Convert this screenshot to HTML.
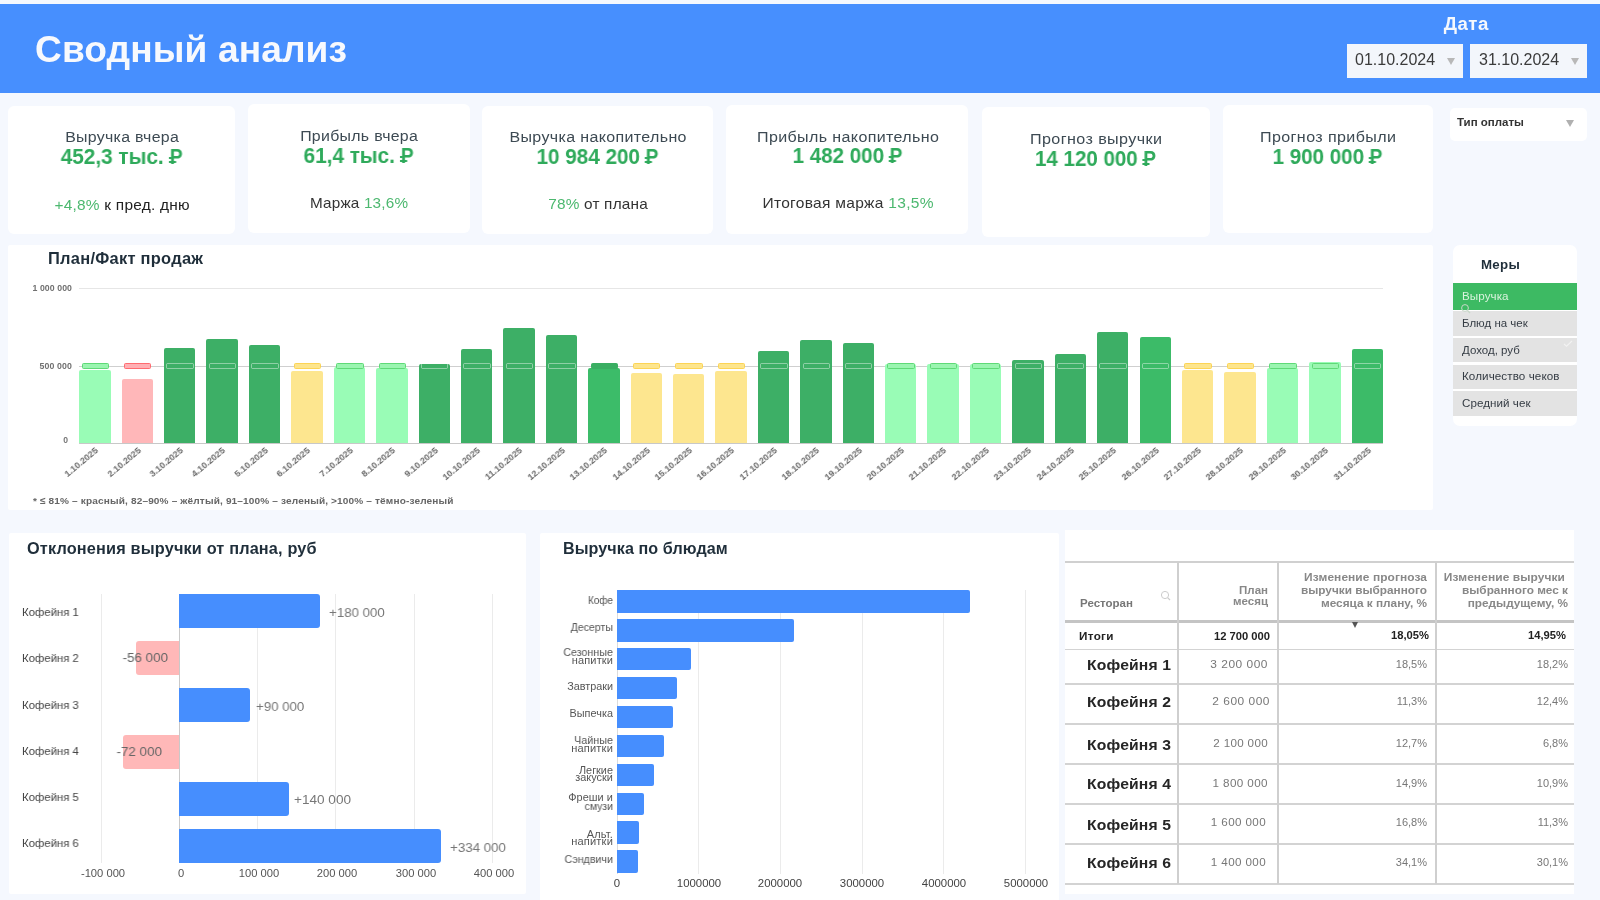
<!DOCTYPE html>
<html lang="ru"><head><meta charset="utf-8"><title>Сводный анализ</title>
<style>
html,body{margin:0;padding:0;}
body{width:1600px;height:900px;overflow:hidden;position:relative;background:#f5f8fe;font-family:"Liberation Sans", sans-serif;}
.t{position:absolute;line-height:1;white-space:nowrap;will-change:transform;}
.r{position:absolute;box-sizing:border-box;}
.tri{position:absolute;width:0;height:0;}
.g2{color:#4cb86f;}
.rub{position:relative;display:inline-block;transform:scaleX(0.92);transform-origin:0 50%;}
.rub i{position:absolute;left:-0.08em;width:0.55em;background:currentColor;}
.xl{width:200px;text-align:right;font-size:9.1px;font-weight:700;color:#6a6a6a;transform:rotate(-40deg);transform-origin:100% 50%;}
.ml{width:300px;text-align:right;font-size:10.3px;line-height:9.6px;color:#555;white-space:nowrap;}
</style></head><body>
<div class="r" style="left:0.00px;top:4.00px;width:1600.00px;height:89.00px;background:#478ffe;"></div>
<div class="t" style="top:30.98px;font-size:37px;font-weight:700;color:#f7f9fd;letter-spacing:0.088px;left:35.00px;transform:scaleX(1.003708188285152);transform-origin:0 0;">Сводный анализ</div>
<div class="t" style="top:14.56px;font-size:18px;font-weight:700;color:#f5f8fd;letter-spacing:0.471px;text-indent:0.471px;left:1066.30px;width:800px;text-align:center;transform:scaleX(1.035133108361455);transform-origin:50% 0;">Дата</div>
<div class="r" style="left:1346.50px;top:44.00px;width:116.50px;height:34.00px;background:#f3f6fb;"></div>
<div class="r" style="left:1470.00px;top:44.00px;width:117.00px;height:34.00px;background:#f3f6fb;"></div>
<div class="t" style="top:52.26px;font-size:16px;font-weight:400;color:#3b3b3b;left:1355.00px;">01.10.2024</div>
<div class="t" style="top:52.26px;font-size:16px;font-weight:400;color:#3b3b3b;left:1479.00px;">31.10.2024</div>
<div class="tri" style="left:1447px;top:57.5px;border-left:4px solid transparent;border-right:4px solid transparent;border-top:7px solid #b8b8b8"></div>
<div class="tri" style="left:1571px;top:57.5px;border-left:4px solid transparent;border-right:4px solid transparent;border-top:7px solid #b8b8b8"></div>
<div class="r" style="left:8.00px;top:106.00px;width:227.00px;height:128.00px;background:#ffffff;border-radius:6px;"></div>
<div class="t" style="top:128.96px;font-size:15.4px;font-weight:400;color:#3d4a53;letter-spacing:0.285px;text-indent:0.285px;left:-278.50px;width:800px;text-align:center;transform:scaleX(1.0331768847169256);transform-origin:50% 0;">Выручка вчера</div>
<div class="t" style="top:146.68px;font-size:21.4px;font-weight:700;color:#2faa5b;letter-spacing:-0.049px;text-indent:-0.049px;left:-278.50px;width:800px;text-align:center;transform:scaleX(0.9759630922411082);transform-origin:50% 0;">452,3 тыс. <span class="rub">Р<i style="height:2.14px;top:14.02px;left:-0.03em;width:0.37em"></i><i style="height:2.14px;top:10.06px;left:-0.03em;width:0.12em"></i></span></div>
<div class="t" style="top:196.70px;font-size:15px;font-weight:400;color:#222;letter-spacing:0.222px;text-indent:0.222px;left:-278.50px;width:800px;text-align:center;transform:scaleX(1.028569680655818);transform-origin:50% 0;"><span class="g2">+4,8%</span> к пред. дню</div>
<div class="r" style="left:248.00px;top:104.00px;width:222.00px;height:129.00px;background:#ffffff;border-radius:6px;"></div>
<div class="t" style="top:127.76px;font-size:15.4px;font-weight:400;color:#3d4a53;letter-spacing:0.288px;text-indent:0.288px;left:-40.60px;width:800px;text-align:center;transform:scaleX(1.0322781232334652);transform-origin:50% 0;">Прибыль вчера</div>
<div class="t" style="top:146.18px;font-size:21.4px;font-weight:700;color:#2faa5b;letter-spacing:-0.055px;text-indent:-0.055px;left:-40.60px;width:800px;text-align:center;transform:scaleX(0.9733689427001158);transform-origin:50% 0;">61,4 тыс. <span class="rub">Р<i style="height:2.14px;top:14.02px;left:-0.03em;width:0.37em"></i><i style="height:2.14px;top:10.06px;left:-0.03em;width:0.12em"></i></span></div>
<div class="t" style="top:194.50px;font-size:15px;font-weight:400;color:#333;letter-spacing:0.174px;text-indent:0.174px;left:-40.60px;width:800px;text-align:center;transform:scaleX(1.018775847808106);transform-origin:50% 0;">Маржа <span class="g2">13,6%</span></div>
<div class="r" style="left:482.00px;top:106.00px;width:231.00px;height:128.00px;background:#ffffff;border-radius:6px;"></div>
<div class="t" style="top:129.46px;font-size:15.4px;font-weight:400;color:#3d4a53;letter-spacing:0.334px;text-indent:0.334px;left:198.40px;width:800px;text-align:center;transform:scaleX(1.0403548941041785);transform-origin:50% 0;">Выручка накопительно</div>
<div class="t" style="top:147.03px;font-size:21.4px;font-weight:700;color:#2faa5b;letter-spacing:-0.058px;text-indent:-0.058px;left:198.40px;width:800px;text-align:center;transform:scaleX(0.9720084628581548);transform-origin:50% 0;">10 984 200 <span class="rub">Р<i style="height:2.14px;top:14.02px;left:-0.03em;width:0.37em"></i><i style="height:2.14px;top:10.06px;left:-0.03em;width:0.12em"></i></span></div>
<div class="t" style="top:195.80px;font-size:15px;font-weight:400;color:#333;letter-spacing:0.196px;text-indent:0.196px;left:198.40px;width:800px;text-align:center;transform:scaleX(1.0231679263884326);transform-origin:50% 0;"><span class="g2">78%</span> от плана</div>
<div class="r" style="left:726.00px;top:105.00px;width:242.00px;height:129.00px;background:#ffffff;border-radius:6px;"></div>
<div class="t" style="top:128.66px;font-size:15.4px;font-weight:400;color:#3d4a53;letter-spacing:0.358px;text-indent:0.358px;left:447.60px;width:800px;text-align:center;transform:scaleX(1.0422718808193667);transform-origin:50% 0;">Прибыль накопительно</div>
<div class="t" style="top:145.98px;font-size:21.4px;font-weight:700;color:#2faa5b;letter-spacing:-0.066px;text-indent:-0.066px;left:447.60px;width:800px;text-align:center;transform:scaleX(0.9683938601655481);transform-origin:50% 0;">1 482 000 <span class="rub">Р<i style="height:2.14px;top:14.02px;left:-0.03em;width:0.37em"></i><i style="height:2.14px;top:10.06px;left:-0.03em;width:0.12em"></i></span></div>
<div class="t" style="top:195.30px;font-size:15px;font-weight:400;color:#333;letter-spacing:0.284px;text-indent:0.284px;left:447.60px;width:800px;text-align:center;transform:scaleX(1.0348973607038123);transform-origin:50% 0;">Итоговая маржа <span class="g2">13,5%</span></div>
<div class="r" style="left:982.00px;top:107.30px;width:227.70px;height:129.50px;background:#ffffff;border-radius:6px;"></div>
<div class="t" style="top:131.21px;font-size:15.4px;font-weight:400;color:#3d4a53;letter-spacing:0.386px;text-indent:0.386px;left:696.30px;width:800px;text-align:center;transform:scaleX(1.0468669083376487);transform-origin:50% 0;">Прогноз выручки</div>
<div class="t" style="top:148.53px;font-size:21.4px;font-weight:700;color:#2faa5b;letter-spacing:-0.073px;text-indent:-0.073px;left:696.30px;width:800px;text-align:center;transform:scaleX(0.9652706885724321);transform-origin:50% 0;">14 120 000 <span class="rub">Р<i style="height:2.14px;top:14.02px;left:-0.03em;width:0.37em"></i><i style="height:2.14px;top:10.06px;left:-0.03em;width:0.12em"></i></span></div>
<div class="r" style="left:1223.00px;top:105.00px;width:210.00px;height:128.00px;background:#ffffff;border-radius:6px;"></div>
<div class="t" style="top:128.96px;font-size:15.4px;font-weight:400;color:#3d4a53;letter-spacing:0.377px;text-indent:0.377px;left:928.40px;width:800px;text-align:center;transform:scaleX(1.0441360340085022);transform-origin:50% 0;">Прогноз прибыли</div>
<div class="t" style="top:146.53px;font-size:21.4px;font-weight:700;color:#2faa5b;letter-spacing:-0.066px;text-indent:-0.066px;left:928.40px;width:800px;text-align:center;transform:scaleX(0.9683938601655481);transform-origin:50% 0;">1 900 000 <span class="rub">Р<i style="height:2.14px;top:14.02px;left:-0.03em;width:0.37em"></i><i style="height:2.14px;top:10.06px;left:-0.03em;width:0.12em"></i></span></div>
<div class="r" style="left:1450.00px;top:107.50px;width:136.50px;height:33.00px;background:#ffffff;border-radius:5px;"></div>
<div class="t" style="top:117.07px;font-size:11.5px;font-weight:700;color:#333;left:1457.00px;">Тип оплаты</div>
<div class="tri" style="left:1566px;top:120px;border-left:4px solid transparent;border-right:4px solid transparent;border-top:7px solid #b0b0b0"></div>
<div class="r" style="left:8.00px;top:244.50px;width:1424.50px;height:265.50px;background:#ffffff;border-radius:2px;"></div>
<div class="t" style="top:250.86px;font-size:16px;font-weight:700;color:#1f2e3a;letter-spacing:0.262px;left:47.50px;transform:scaleX(1.0274912262044027);transform-origin:0 0;">План/Факт продаж</div>
<div class="t" style="top:283.62px;font-size:8.6px;font-weight:700;color:#707070;letter-spacing:0.072px;left:-728.03px;width:800px;text-align:right;transform:scaleX(1.0152431548835308);transform-origin:100% 0;">1 000 000</div>
<div class="t" style="top:361.72px;font-size:8.6px;font-weight:700;color:#707070;letter-spacing:0.108px;left:-727.89px;width:800px;text-align:right;transform:scaleX(1.0212669683257918);transform-origin:100% 0;">500 000</div>
<div class="t" style="top:436.22px;font-size:8.6px;font-weight:700;color:#777;left:-732.50px;width:800px;text-align:right;">0</div>
<div class="r" style="left:79.40px;top:288.00px;width:1303.60px;height:1.00px;background:#e6e6e6;"></div>
<div class="r" style="left:79.40px;top:365.80px;width:1303.60px;height:1.20px;background:#cfcfcf;"></div>
<div class="r" style="left:79.25px;top:370.00px;width:31.40px;height:73.30px;background:#99fcb6;border-radius:2px 2px 0 0;"></div>
<div class="r" style="left:81.65px;top:363.3px;width:27.4px;height:5.6px;background:#9af5b0;border:1px solid #5fd977;border-radius:1.5px;"></div>
<div class="t xl" style="left:-102.75px;top:444.85px;">1.10.2025</div>
<div class="r" style="left:121.66px;top:379.00px;width:31.40px;height:64.30px;background:#ffb7b9;border-radius:2px 2px 0 0;"></div>
<div class="r" style="left:124.06px;top:363.3px;width:27.4px;height:5.6px;background:#ffb0b4;border:1px solid #ff6b70;border-radius:1.5px;"></div>
<div class="t xl" style="left:-60.34px;top:444.85px;">2.10.2025</div>
<div class="r" style="left:164.07px;top:348.00px;width:31.40px;height:95.30px;background:#3daf66;border-radius:2px 2px 0 0;"></div>
<div class="r" style="left:166.47px;top:363.3px;width:27.4px;height:5.6px;background:rgba(0,0,0,0);border:1px solid rgba(255,255,255,0.42);border-radius:1.5px;"></div>
<div class="t xl" style="left:-17.93px;top:444.85px;">3.10.2025</div>
<div class="r" style="left:206.48px;top:338.50px;width:31.40px;height:104.80px;background:#3daf66;border-radius:2px 2px 0 0;"></div>
<div class="r" style="left:208.88px;top:363.3px;width:27.4px;height:5.6px;background:rgba(0,0,0,0);border:1px solid rgba(255,255,255,0.42);border-radius:1.5px;"></div>
<div class="t xl" style="left:24.48px;top:444.85px;">4.10.2025</div>
<div class="r" style="left:248.89px;top:345.00px;width:31.40px;height:98.30px;background:#3daf66;border-radius:2px 2px 0 0;"></div>
<div class="r" style="left:251.29px;top:363.3px;width:27.4px;height:5.6px;background:rgba(0,0,0,0);border:1px solid rgba(255,255,255,0.42);border-radius:1.5px;"></div>
<div class="t xl" style="left:66.89px;top:444.85px;">5.10.2025</div>
<div class="r" style="left:291.30px;top:371.00px;width:31.40px;height:72.30px;background:#fde68f;border-radius:2px 2px 0 0;"></div>
<div class="r" style="left:293.70px;top:363.3px;width:27.4px;height:5.6px;background:#fde58d;border:1px solid #fcd455;border-radius:1.5px;"></div>
<div class="t xl" style="left:109.30px;top:444.85px;">6.10.2025</div>
<div class="r" style="left:333.71px;top:367.00px;width:31.40px;height:76.30px;background:#99fcb6;border-radius:2px 2px 0 0;"></div>
<div class="r" style="left:336.11px;top:363.3px;width:27.4px;height:5.6px;background:#9af5b0;border:1px solid #5fd977;border-radius:1.5px;"></div>
<div class="t xl" style="left:151.71px;top:444.85px;">7.10.2025</div>
<div class="r" style="left:376.12px;top:368.00px;width:31.40px;height:75.30px;background:#99fcb6;border-radius:2px 2px 0 0;"></div>
<div class="r" style="left:378.52px;top:363.3px;width:27.4px;height:5.6px;background:#9af5b0;border:1px solid #5fd977;border-radius:1.5px;"></div>
<div class="t xl" style="left:194.12px;top:444.85px;">8.10.2025</div>
<div class="r" style="left:418.53px;top:363.50px;width:31.40px;height:79.80px;background:#3daf66;border-radius:2px 2px 0 0;"></div>
<div class="r" style="left:420.93px;top:363.3px;width:27.4px;height:5.6px;background:rgba(0,0,0,0);border:1px solid rgba(255,255,255,0.42);border-radius:1.5px;"></div>
<div class="t xl" style="left:236.53px;top:444.85px;">9.10.2025</div>
<div class="r" style="left:460.94px;top:349.25px;width:31.40px;height:94.05px;background:#3daf66;border-radius:2px 2px 0 0;"></div>
<div class="r" style="left:463.34px;top:363.3px;width:27.4px;height:5.6px;background:rgba(0,0,0,0);border:1px solid rgba(255,255,255,0.42);border-radius:1.5px;"></div>
<div class="t xl" style="left:278.94px;top:444.85px;">10.10.2025</div>
<div class="r" style="left:503.35px;top:327.50px;width:31.40px;height:115.80px;background:#3daf66;border-radius:2px 2px 0 0;"></div>
<div class="r" style="left:505.75px;top:363.3px;width:27.4px;height:5.6px;background:rgba(0,0,0,0);border:1px solid rgba(255,255,255,0.42);border-radius:1.5px;"></div>
<div class="t xl" style="left:321.35px;top:444.85px;">11.10.2025</div>
<div class="r" style="left:545.76px;top:335.25px;width:31.40px;height:108.05px;background:#3daf66;border-radius:2px 2px 0 0;"></div>
<div class="r" style="left:548.16px;top:363.3px;width:27.4px;height:5.6px;background:rgba(0,0,0,0);border:1px solid rgba(255,255,255,0.42);border-radius:1.5px;"></div>
<div class="t xl" style="left:363.76px;top:444.85px;">12.10.2025</div>
<div class="r" style="left:588.17px;top:368.00px;width:31.40px;height:75.30px;background:#3cbc69;border-radius:2px 2px 0 0;"></div>
<div class="r" style="left:590.57px;top:363.3px;width:27.4px;height:5.6px;background:#3aae62;border:1px solid #3aae62;border-radius:1.5px;"></div>
<div class="t xl" style="left:406.17px;top:444.85px;">13.10.2025</div>
<div class="r" style="left:630.58px;top:372.50px;width:31.40px;height:70.80px;background:#fde68f;border-radius:2px 2px 0 0;"></div>
<div class="r" style="left:632.98px;top:363.3px;width:27.4px;height:5.6px;background:#fde58d;border:1px solid #fcd455;border-radius:1.5px;"></div>
<div class="t xl" style="left:448.58px;top:444.85px;">14.10.2025</div>
<div class="r" style="left:672.99px;top:374.00px;width:31.40px;height:69.30px;background:#fde68f;border-radius:2px 2px 0 0;"></div>
<div class="r" style="left:675.39px;top:363.3px;width:27.4px;height:5.6px;background:#fde58d;border:1px solid #fcd455;border-radius:1.5px;"></div>
<div class="t xl" style="left:490.99px;top:444.85px;">15.10.2025</div>
<div class="r" style="left:715.40px;top:370.75px;width:31.40px;height:72.55px;background:#fde68f;border-radius:2px 2px 0 0;"></div>
<div class="r" style="left:717.80px;top:363.3px;width:27.4px;height:5.6px;background:#fde58d;border:1px solid #fcd455;border-radius:1.5px;"></div>
<div class="t xl" style="left:533.40px;top:444.85px;">16.10.2025</div>
<div class="r" style="left:757.81px;top:350.75px;width:31.40px;height:92.55px;background:#3daf66;border-radius:2px 2px 0 0;"></div>
<div class="r" style="left:760.21px;top:363.3px;width:27.4px;height:5.6px;background:rgba(0,0,0,0);border:1px solid rgba(255,255,255,0.42);border-radius:1.5px;"></div>
<div class="t xl" style="left:575.81px;top:444.85px;">17.10.2025</div>
<div class="r" style="left:800.22px;top:340.00px;width:31.40px;height:103.30px;background:#3daf66;border-radius:2px 2px 0 0;"></div>
<div class="r" style="left:802.62px;top:363.3px;width:27.4px;height:5.6px;background:rgba(0,0,0,0);border:1px solid rgba(255,255,255,0.42);border-radius:1.5px;"></div>
<div class="t xl" style="left:618.22px;top:444.85px;">18.10.2025</div>
<div class="r" style="left:842.63px;top:343.25px;width:31.40px;height:100.05px;background:#3daf66;border-radius:2px 2px 0 0;"></div>
<div class="r" style="left:845.03px;top:363.3px;width:27.4px;height:5.6px;background:rgba(0,0,0,0);border:1px solid rgba(255,255,255,0.42);border-radius:1.5px;"></div>
<div class="t xl" style="left:660.63px;top:444.85px;">19.10.2025</div>
<div class="r" style="left:885.04px;top:364.00px;width:31.40px;height:79.30px;background:#99fcb6;border-radius:2px 2px 0 0;"></div>
<div class="r" style="left:887.44px;top:363.3px;width:27.4px;height:5.6px;background:#9af5b0;border:1px solid #5fd977;border-radius:1.5px;"></div>
<div class="t xl" style="left:703.04px;top:444.85px;">20.10.2025</div>
<div class="r" style="left:927.45px;top:364.00px;width:31.40px;height:79.30px;background:#99fcb6;border-radius:2px 2px 0 0;"></div>
<div class="r" style="left:929.85px;top:363.3px;width:27.4px;height:5.6px;background:#9af5b0;border:1px solid #5fd977;border-radius:1.5px;"></div>
<div class="t xl" style="left:745.45px;top:444.85px;">21.10.2025</div>
<div class="r" style="left:969.86px;top:364.00px;width:31.40px;height:79.30px;background:#99fcb6;border-radius:2px 2px 0 0;"></div>
<div class="r" style="left:972.26px;top:363.3px;width:27.4px;height:5.6px;background:#9af5b0;border:1px solid #5fd977;border-radius:1.5px;"></div>
<div class="t xl" style="left:787.86px;top:444.85px;">22.10.2025</div>
<div class="r" style="left:1012.27px;top:360.30px;width:31.40px;height:83.00px;background:#3daf66;border-radius:2px 2px 0 0;"></div>
<div class="r" style="left:1014.67px;top:363.3px;width:27.4px;height:5.6px;background:rgba(0,0,0,0);border:1px solid rgba(255,255,255,0.42);border-radius:1.5px;"></div>
<div class="t xl" style="left:830.27px;top:444.85px;">23.10.2025</div>
<div class="r" style="left:1054.68px;top:354.10px;width:31.40px;height:89.20px;background:#3daf66;border-radius:2px 2px 0 0;"></div>
<div class="r" style="left:1057.08px;top:363.3px;width:27.4px;height:5.6px;background:rgba(0,0,0,0);border:1px solid rgba(255,255,255,0.42);border-radius:1.5px;"></div>
<div class="t xl" style="left:872.68px;top:444.85px;">24.10.2025</div>
<div class="r" style="left:1097.09px;top:332.25px;width:31.40px;height:111.05px;background:#3daf66;border-radius:2px 2px 0 0;"></div>
<div class="r" style="left:1099.49px;top:363.3px;width:27.4px;height:5.6px;background:rgba(0,0,0,0);border:1px solid rgba(255,255,255,0.42);border-radius:1.5px;"></div>
<div class="t xl" style="left:915.09px;top:444.85px;">25.10.2025</div>
<div class="r" style="left:1139.50px;top:337.00px;width:31.40px;height:106.30px;background:#3cbb68;border-radius:2px 2px 0 0;"></div>
<div class="r" style="left:1141.90px;top:363.3px;width:27.4px;height:5.6px;background:rgba(0,0,0,0);border:1px solid rgba(255,255,255,0.42);border-radius:1.5px;"></div>
<div class="t xl" style="left:957.50px;top:444.85px;">26.10.2025</div>
<div class="r" style="left:1181.91px;top:370.00px;width:31.40px;height:73.30px;background:#fde68f;border-radius:2px 2px 0 0;"></div>
<div class="r" style="left:1184.31px;top:363.3px;width:27.4px;height:5.6px;background:#fde58d;border:1px solid #fcd455;border-radius:1.5px;"></div>
<div class="t xl" style="left:999.91px;top:444.85px;">27.10.2025</div>
<div class="r" style="left:1224.32px;top:372.00px;width:31.40px;height:71.30px;background:#fde68f;border-radius:2px 2px 0 0;"></div>
<div class="r" style="left:1226.72px;top:363.3px;width:27.4px;height:5.6px;background:#fde58d;border:1px solid #fcd455;border-radius:1.5px;"></div>
<div class="t xl" style="left:1042.32px;top:444.85px;">28.10.2025</div>
<div class="r" style="left:1266.73px;top:367.60px;width:31.40px;height:75.70px;background:#99fcb6;border-radius:2px 2px 0 0;"></div>
<div class="r" style="left:1269.13px;top:363.3px;width:27.4px;height:5.6px;background:#9af5b0;border:1px solid #5fd977;border-radius:1.5px;"></div>
<div class="t xl" style="left:1084.73px;top:444.85px;">29.10.2025</div>
<div class="r" style="left:1309.14px;top:362.00px;width:31.40px;height:81.30px;background:#99fcb6;border-radius:2px 2px 0 0;"></div>
<div class="r" style="left:1311.54px;top:363.3px;width:27.4px;height:5.6px;background:#9af5b0;border:1px solid #5fd977;border-radius:1.5px;"></div>
<div class="t xl" style="left:1127.14px;top:444.85px;">30.10.2025</div>
<div class="r" style="left:1351.55px;top:349.40px;width:31.40px;height:93.90px;background:#3cbb68;border-radius:2px 2px 0 0;"></div>
<div class="r" style="left:1353.95px;top:363.3px;width:27.4px;height:5.6px;background:rgba(0,0,0,0);border:1px solid rgba(255,255,255,0.42);border-radius:1.5px;"></div>
<div class="t xl" style="left:1169.55px;top:444.85px;">31.10.2025</div>
<div class="r" style="left:79.40px;top:443.00px;width:1303.60px;height:1.30px;background:#c8c8c8;"></div>
<div class="t" style="top:495.70px;font-size:9.8px;font-weight:700;color:#666;letter-spacing:0.140px;left:33.00px;transform:scaleX(1.02704555246563);transform-origin:0 0;">* ≤ 81% – красный, 82–90% – жёлтый, 91–100% – зеленый, &gt;100% – тёмно-зеленый</div>
<div class="r" style="left:1453.00px;top:245.30px;width:124.40px;height:180.50px;background:#ffffff;border-radius:7px;"></div>
<div class="t" style="top:258.00px;font-size:13px;font-weight:700;color:#1f2e3a;letter-spacing:0.275px;left:1480.50px;transform:scaleX(1.022778947368421);transform-origin:0 0;">Меры</div>
<div class="r" style="left:1453.00px;top:283.30px;width:124.40px;height:26.80px;background:#3dba63;"></div>
<div class="t" style="top:291.17px;font-size:11.5px;font-weight:400;color:#d9f3dd;letter-spacing:0.072px;left:1461.90px;transform:scaleX(1.0095890410958903);transform-origin:0 0;">Выручка</div>
<div class="r" style="left:1453.00px;top:310.70px;width:124.40px;height:25.00px;background:#e3e3e3;"></div>
<div class="t" style="top:317.67px;font-size:11.5px;font-weight:400;color:#353c44;letter-spacing:-0.004px;left:1461.90px;transform:scaleX(0.9965668804941792);transform-origin:0 0;">Блюд на чек</div>
<div class="r" style="left:1453.00px;top:337.80px;width:124.40px;height:24.70px;background:#e3e3e3;"></div>
<div class="t" style="top:344.62px;font-size:11.5px;font-weight:400;color:#353c44;letter-spacing:-0.005px;left:1461.90px;transform:scaleX(0.9958626284478096);transform-origin:0 0;">Доход, руб</div>
<div class="r" style="left:1453.00px;top:364.60px;width:124.40px;height:24.70px;background:#e3e3e3;"></div>
<div class="t" style="top:371.42px;font-size:11.5px;font-weight:400;color:#353c44;letter-spacing:0.082px;left:1461.90px;transform:scaleX(1.0130735076467685);transform-origin:0 0;">Количество чеков</div>
<div class="r" style="left:1453.00px;top:391.40px;width:124.40px;height:24.90px;background:#e3e3e3;"></div>
<div class="t" style="top:398.32px;font-size:11.5px;font-weight:400;color:#353c44;letter-spacing:0.056px;left:1461.90px;transform:scaleX(1.0083487940630798);transform-origin:0 0;">Средний чек</div>
<svg class="r" style="left:1460px;top:303px" width="12" height="12" viewBox="0 0 12 12"><circle cx="5" cy="5" r="3.4" fill="none" stroke="#c8d8c8" stroke-width="1"/><line x1="7.5" y1="7.5" x2="10" y2="10" stroke="#c8d8c8" stroke-width="1.2"/></svg>
<svg class="r" style="left:1563px;top:340px" width="10" height="7" viewBox="0 0 10 7"><polyline points="1,4 3.5,6.2 9,1" fill="none" stroke="#f2f2f2" stroke-width="1.1"/></svg>
<div class="r" style="left:8.60px;top:533.00px;width:517.70px;height:360.70px;background:#ffffff;border-radius:2px;"></div>
<div class="t" style="top:540.76px;font-size:16px;font-weight:700;color:#1f2e3a;letter-spacing:0.156px;left:27.00px;transform:scaleX(1.0175471908857365);transform-origin:0 0;">Отклонения выручки от плана, руб</div>
<div class="r" style="left:100.70px;top:594.00px;width:1.00px;height:268.50px;background:#ebebeb;"></div>
<div class="t" style="top:868.02px;font-size:11.2px;font-weight:400;color:#555;left:-297.30px;width:800px;text-align:center;">-100 000</div>
<div class="r" style="left:178.90px;top:594.00px;width:1.00px;height:268.50px;background:#c9c9c9;"></div>
<div class="t" style="top:868.02px;font-size:11.2px;font-weight:400;color:#555;left:-219.10px;width:800px;text-align:center;">0</div>
<div class="r" style="left:257.10px;top:594.00px;width:1.00px;height:268.50px;background:#ebebeb;"></div>
<div class="t" style="top:868.02px;font-size:11.2px;font-weight:400;color:#555;left:-140.90px;width:800px;text-align:center;">100 000</div>
<div class="r" style="left:335.30px;top:594.00px;width:1.00px;height:268.50px;background:#ebebeb;"></div>
<div class="t" style="top:868.02px;font-size:11.2px;font-weight:400;color:#555;left:-62.70px;width:800px;text-align:center;">200 000</div>
<div class="r" style="left:413.50px;top:594.00px;width:1.00px;height:268.50px;background:#ebebeb;"></div>
<div class="t" style="top:868.02px;font-size:11.2px;font-weight:400;color:#555;left:15.50px;width:800px;text-align:center;">300 000</div>
<div class="r" style="left:491.70px;top:594.00px;width:1.00px;height:268.50px;background:#ebebeb;"></div>
<div class="t" style="top:868.02px;font-size:11.2px;font-weight:400;color:#555;left:93.70px;width:800px;text-align:center;">400 000</div>
<div class="r" style="left:179.40px;top:593.75px;width:140.76px;height:34.20px;background:#468efe;border-radius:0 3px 3px 0;"></div>
<div class="t" style="top:605.79px;font-size:13.6px;font-weight:400;color:#777;letter-spacing:-0.028px;left:329.00px;transform:scaleX(0.9809663290446209);transform-origin:0 0;">+180 000</div>
<div class="t" style="top:607.17px;font-size:11.5px;font-weight:400;color:#444;letter-spacing:-0.014px;left:22.25px;transform:scaleX(0.9889682324192235);transform-origin:0 0;">Кофейня 1</div>
<div class="r" style="left:135.61px;top:640.70px;width:43.79px;height:34.20px;background:#ffb8b8;border-radius:3px 0 0 3px;"></div>
<div class="t" style="top:651.09px;font-size:13.6px;font-weight:400;color:#666;letter-spacing:-0.018px;left:-631.82px;width:800px;text-align:right;transform:scaleX(0.9869230769230769);transform-origin:100% 0;">-56 000</div>
<div class="t" style="top:653.43px;font-size:11.5px;font-weight:400;color:#444;letter-spacing:-0.014px;left:22.25px;transform:scaleX(0.9889682324192235);transform-origin:0 0;">Кофейня 2</div>
<div class="r" style="left:179.40px;top:687.65px;width:70.38px;height:34.20px;background:#468efe;border-radius:0 3px 3px 0;"></div>
<div class="t" style="top:699.79px;font-size:13.6px;font-weight:400;color:#777;letter-spacing:-0.031px;left:255.50px;transform:scaleX(0.9788706624605678);transform-origin:0 0;">+90 000</div>
<div class="t" style="top:699.69px;font-size:11.5px;font-weight:400;color:#444;letter-spacing:-0.014px;left:22.25px;transform:scaleX(0.9889682324192235);transform-origin:0 0;">Кофейня 3</div>
<div class="r" style="left:123.10px;top:734.60px;width:56.30px;height:34.20px;background:#ffb8b8;border-radius:3px 0 0 3px;"></div>
<div class="t" style="top:745.19px;font-size:13.6px;font-weight:400;color:#666;letter-spacing:-0.015px;left:-637.62px;width:800px;text-align:right;transform:scaleX(0.9887665198237886);transform-origin:100% 0;">-72 000</div>
<div class="t" style="top:745.95px;font-size:11.5px;font-weight:400;color:#444;letter-spacing:-0.014px;left:22.25px;transform:scaleX(0.9889682324192235);transform-origin:0 0;">Кофейня 4</div>
<div class="r" style="left:179.40px;top:781.55px;width:109.48px;height:34.20px;background:#468efe;border-radius:0 3px 3px 0;"></div>
<div class="t" style="top:792.99px;font-size:13.6px;font-weight:400;color:#777;letter-spacing:-0.012px;left:293.50px;transform:scaleX(0.9913906378319189);transform-origin:0 0;">+140 000</div>
<div class="t" style="top:792.21px;font-size:11.5px;font-weight:400;color:#444;letter-spacing:-0.014px;left:22.25px;transform:scaleX(0.9889682324192235);transform-origin:0 0;">Кофейня 5</div>
<div class="r" style="left:179.40px;top:828.50px;width:261.19px;height:34.20px;background:#468efe;border-radius:0 3px 3px 0;"></div>
<div class="t" style="top:841.39px;font-size:13.6px;font-weight:400;color:#777;letter-spacing:-0.023px;left:450.20px;transform:scaleX(0.983944702983849);transform-origin:0 0;">+334 000</div>
<div class="t" style="top:838.47px;font-size:11.5px;font-weight:400;color:#444;letter-spacing:-0.014px;left:22.25px;transform:scaleX(0.9889682324192235);transform-origin:0 0;">Кофейня 6</div>
<div class="r" style="left:540.00px;top:533.00px;width:518.50px;height:380.00px;background:#ffffff;border-radius:2px;"></div>
<div class="t" style="top:540.76px;font-size:16px;font-weight:700;color:#1f2e3a;letter-spacing:0.077px;left:563.40px;transform:scaleX(1.0076967536846162);transform-origin:0 0;">Выручка по блюдам</div>
<div class="r" style="left:616.50px;top:590.00px;width:1.00px;height:283.60px;background:#dcdcdc;"></div>
<div class="t" style="top:878.05px;font-size:11.4px;font-weight:400;color:#444;left:217.00px;width:800px;text-align:center;">0</div>
<div class="r" style="left:698.20px;top:590.00px;width:1.00px;height:283.60px;background:#ebebeb;"></div>
<div class="t" style="top:878.05px;font-size:11.4px;font-weight:400;color:#444;left:298.70px;width:800px;text-align:center;">1000000</div>
<div class="r" style="left:779.90px;top:590.00px;width:1.00px;height:283.60px;background:#ebebeb;"></div>
<div class="t" style="top:878.05px;font-size:11.4px;font-weight:400;color:#444;left:380.40px;width:800px;text-align:center;">2000000</div>
<div class="r" style="left:861.60px;top:590.00px;width:1.00px;height:283.60px;background:#ebebeb;"></div>
<div class="t" style="top:878.05px;font-size:11.4px;font-weight:400;color:#444;left:462.10px;width:800px;text-align:center;">3000000</div>
<div class="r" style="left:943.30px;top:590.00px;width:1.00px;height:283.60px;background:#ebebeb;"></div>
<div class="t" style="top:878.05px;font-size:11.4px;font-weight:400;color:#444;left:543.80px;width:800px;text-align:center;">4000000</div>
<div class="r" style="left:1025.00px;top:590.00px;width:1.00px;height:283.60px;background:#ebebeb;"></div>
<div class="t" style="top:878.05px;font-size:11.4px;font-weight:400;color:#444;left:625.50px;width:800px;text-align:center;">5000000</div>
<div class="r" style="left:617.00px;top:590.10px;width:352.50px;height:22.50px;background:#468efe;border-radius:0 2px 2px 0;"></div>
<div class="r" style="left:617.00px;top:619.02px;width:177.40px;height:22.50px;background:#468efe;border-radius:0 2px 2px 0;"></div>
<div class="r" style="left:617.00px;top:647.94px;width:74.30px;height:22.50px;background:#468efe;border-radius:0 2px 2px 0;"></div>
<div class="r" style="left:617.00px;top:676.86px;width:59.50px;height:22.50px;background:#468efe;border-radius:0 2px 2px 0;"></div>
<div class="r" style="left:617.00px;top:705.78px;width:56.30px;height:22.50px;background:#468efe;border-radius:0 2px 2px 0;"></div>
<div class="r" style="left:617.00px;top:734.70px;width:47.40px;height:22.50px;background:#468efe;border-radius:0 2px 2px 0;"></div>
<div class="r" style="left:617.00px;top:763.62px;width:37.00px;height:22.50px;background:#468efe;border-radius:0 2px 2px 0;"></div>
<div class="r" style="left:617.00px;top:792.54px;width:27.20px;height:22.50px;background:#468efe;border-radius:0 2px 2px 0;"></div>
<div class="r" style="left:617.00px;top:821.46px;width:22.00px;height:22.50px;background:#468efe;border-radius:0 2px 2px 0;"></div>
<div class="r" style="left:617.00px;top:850.38px;width:20.80px;height:22.50px;background:#468efe;border-radius:0 2px 2px 0;"></div>
<div class="t" style="top:594.66px;font-size:10.8px;font-weight:400;color:#555;letter-spacing:-0.112px;left:-186.81px;width:800px;text-align:right;transform:scaleX(0.9347356321839081);transform-origin:100% 0;">Кофе</div>
<div class="t" style="top:621.66px;font-size:10.8px;font-weight:400;color:#555;letter-spacing:-0.020px;left:-186.72px;width:800px;text-align:right;transform:scaleX(0.9841989150090416);transform-origin:100% 0;">Десерты</div>
<div class="t" style="top:646.66px;font-size:10.8px;font-weight:400;color:#555;letter-spacing:-0.008px;left:-186.71px;width:800px;text-align:right;transform:scaleX(0.9933187772925764);transform-origin:100% 0;">Сезонные</div>
<div class="t" style="top:655.36px;font-size:10.8px;font-weight:400;color:#555;letter-spacing:0.119px;left:-186.58px;width:800px;text-align:right;transform:scaleX(1.0183721849071512);transform-origin:100% 0;">напитки</div>
<div class="t" style="top:681.36px;font-size:10.8px;font-weight:400;color:#555;letter-spacing:0.005px;left:-186.70px;width:800px;text-align:right;transform:scaleX(1.0007174581482747);transform-origin:100% 0;">Завтраки</div>
<div class="t" style="top:708.46px;font-size:10.8px;font-weight:400;color:#555;letter-spacing:0.038px;left:-186.66px;width:800px;text-align:right;transform:scaleX(1.0052631578947369);transform-origin:100% 0;">Выпечка</div>
<div class="t" style="top:734.86px;font-size:10.8px;font-weight:400;color:#555;letter-spacing:-0.005px;left:-186.71px;width:800px;text-align:right;transform:scaleX(0.9963191659983961);transform-origin:100% 0;">Чайные</div>
<div class="t" style="top:743.26px;font-size:10.8px;font-weight:400;color:#555;letter-spacing:0.167px;left:-186.53px;width:800px;text-align:right;transform:scaleX(1.0259581193204266);transform-origin:100% 0;">напитки</div>
<div class="t" style="top:764.86px;font-size:10.8px;font-weight:400;color:#555;letter-spacing:0.020px;left:-186.68px;width:800px;text-align:right;transform:scaleX(1.0030050855293573);transform-origin:100% 0;">Легкие</div>
<div class="t" style="top:771.86px;font-size:10.8px;font-weight:400;color:#555;letter-spacing:0.047px;left:-186.65px;width:800px;text-align:right;transform:scaleX(1.007595467897608);transform-origin:100% 0;">закуски</div>
<div class="t" style="top:792.46px;font-size:10.8px;font-weight:400;color:#555;letter-spacing:0.070px;left:-186.63px;width:800px;text-align:right;transform:scaleX(1.0096338428723781);transform-origin:100% 0;">Фреши и</div>
<div class="t" style="top:801.26px;font-size:10.8px;font-weight:400;color:#555;letter-spacing:-0.036px;left:-186.74px;width:800px;text-align:right;transform:scaleX(0.9731006925945658);transform-origin:100% 0;">смузи</div>
<div class="t" style="top:828.86px;font-size:10.8px;font-weight:400;color:#555;letter-spacing:0.119px;left:-186.58px;width:800px;text-align:right;transform:scaleX(1.0193508114856429);transform-origin:100% 0;">Альт.</div>
<div class="t" style="top:835.86px;font-size:10.8px;font-weight:400;color:#555;letter-spacing:0.167px;left:-186.53px;width:800px;text-align:right;transform:scaleX(1.0259581193204266);transform-origin:100% 0;">напитки</div>
<div class="t" style="top:853.86px;font-size:10.8px;font-weight:400;color:#555;letter-spacing:-0.013px;left:-186.71px;width:800px;text-align:right;transform:scaleX(0.9895918367346939);transform-origin:100% 0;">Сэндвичи</div>
<div class="r" style="left:1064.80px;top:530.00px;width:509.50px;height:363.60px;background:#ffffff;"></div>
<div class="r" style="left:1065.00px;top:561.00px;width:509.00px;height:2.00px;background:#d0d0d0;"></div>
<div class="r" style="left:1065.00px;top:619.50px;width:509.00px;height:3.00px;background:#c4c4c4;"></div>
<div class="r" style="left:1065.00px;top:648.50px;width:509.00px;height:1.70px;background:#d3d3d3;"></div>
<div class="r" style="left:1065.00px;top:683.20px;width:509.00px;height:1.70px;background:#d3d3d3;"></div>
<div class="r" style="left:1065.00px;top:723.00px;width:509.00px;height:1.70px;background:#d3d3d3;"></div>
<div class="r" style="left:1065.00px;top:762.90px;width:509.00px;height:1.70px;background:#d3d3d3;"></div>
<div class="r" style="left:1065.00px;top:803.30px;width:509.00px;height:1.70px;background:#d3d3d3;"></div>
<div class="r" style="left:1065.00px;top:843.30px;width:509.00px;height:1.70px;background:#d3d3d3;"></div>
<div class="r" style="left:1065.00px;top:883.30px;width:509.00px;height:1.70px;background:#d3d3d3;"></div>
<div class="r" style="left:1177.00px;top:562.00px;width:2.00px;height:322.00px;background:#cfcfcf;"></div>
<div class="r" style="left:1276.50px;top:562.00px;width:2.00px;height:322.00px;background:#cfcfcf;"></div>
<div class="r" style="left:1435.00px;top:562.00px;width:2.00px;height:322.00px;background:#cfcfcf;"></div>
<div class="t" style="top:597.77px;font-size:11.5px;font-weight:700;color:#777;left:1079.70px;">Ресторан</div>
<div class="t" style="top:585.27px;font-size:11.5px;font-weight:700;color:#888;left:468.00px;width:800px;text-align:right;">План</div>
<div class="t" style="top:595.77px;font-size:11.5px;font-weight:700;color:#888;left:468.00px;width:800px;text-align:right;">месяц</div>
<div class="t" style="top:572.11px;font-size:11.8px;font-weight:700;color:#888;letter-spacing:0.077px;left:627.28px;width:800px;text-align:right;transform:scaleX(1.0110677591364285);transform-origin:100% 0;">Изменение прогноза</div>
<div class="t" style="top:585.26px;font-size:11.8px;font-weight:700;color:#888;left:627.20px;width:800px;text-align:right;">выручки выбранного</div>
<div class="t" style="top:598.41px;font-size:11.8px;font-weight:700;color:#888;left:627.20px;width:800px;text-align:right;">месяца к плану, %</div>
<div class="t" style="top:572.11px;font-size:11.8px;font-weight:700;color:#888;letter-spacing:0.090px;left:764.69px;width:800px;text-align:right;transform:scaleX(1.0123215230037017);transform-origin:100% 0;">Изменение выручки</div>
<div class="t" style="top:585.26px;font-size:11.8px;font-weight:700;color:#888;left:767.80px;width:800px;text-align:right;">выбранного мес к</div>
<div class="t" style="top:598.41px;font-size:11.8px;font-weight:700;color:#888;left:767.80px;width:800px;text-align:right;">предыдущему, %</div>
<div class="t" style="top:631.32px;font-size:11.2px;font-weight:700;color:#222;letter-spacing:0.329px;left:1079.20px;transform:scaleX(1.0433070866141732);transform-origin:0 0;">Итоги</div>
<div class="t" style="top:631.32px;font-size:11.2px;font-weight:700;color:#222;left:469.70px;width:800px;text-align:right;">12 700 000</div>
<div class="t" style="top:630.22px;font-size:11.2px;font-weight:700;color:#222;left:629.00px;width:800px;text-align:right;">18,05%</div>
<div class="t" style="top:630.22px;font-size:11.2px;font-weight:700;color:#222;left:766.00px;width:800px;text-align:right;">14,95%</div>
<div class="tri" style="left:1352px;top:622px;border-left:3.5px solid transparent;border-right:3.5px solid transparent;border-top:6px solid #555"></div>
<div class="t" style="top:657.18px;font-size:15.5px;font-weight:700;color:#262626;letter-spacing:0.137px;left:1086.60px;transform:scaleX(1.0135651509361865);transform-origin:0 0;">Кофейня 1</div>
<div class="t" style="top:658.99px;font-size:11px;font-weight:400;color:#777;letter-spacing:0.476px;left:468.48px;width:800px;text-align:right;transform:scaleX(1.084418901660281);transform-origin:100% 0;">3 200 000</div>
<div class="t" style="top:658.99px;font-size:11px;font-weight:400;color:#777;left:627.00px;width:800px;text-align:right;">18,5%</div>
<div class="t" style="top:658.99px;font-size:11px;font-weight:400;color:#777;left:767.50px;width:800px;text-align:right;">18,2%</div>
<div class="t" style="top:693.88px;font-size:15.5px;font-weight:700;color:#262626;letter-spacing:0.137px;left:1086.60px;transform:scaleX(1.0135651509361865);transform-origin:0 0;">Кофейня 2</div>
<div class="t" style="top:696.49px;font-size:11px;font-weight:400;color:#777;letter-spacing:0.476px;left:469.88px;width:800px;text-align:right;transform:scaleX(1.084418901660281);transform-origin:100% 0;">2 600 000</div>
<div class="t" style="top:696.49px;font-size:11px;font-weight:400;color:#777;left:627.00px;width:800px;text-align:right;">11,3%</div>
<div class="t" style="top:696.49px;font-size:11px;font-weight:400;color:#777;left:767.50px;width:800px;text-align:right;">12,4%</div>
<div class="t" style="top:736.58px;font-size:15.5px;font-weight:700;color:#262626;letter-spacing:0.137px;left:1086.60px;transform:scaleX(1.0135651509361865);transform-origin:0 0;">Кофейня 3</div>
<div class="t" style="top:738.09px;font-size:11px;font-weight:400;color:#777;letter-spacing:0.323px;left:468.32px;width:800px;text-align:right;transform:scaleX(1.0558109833971903);transform-origin:100% 0;">2 100 000</div>
<div class="t" style="top:738.09px;font-size:11px;font-weight:400;color:#777;left:627.00px;width:800px;text-align:right;">12,7%</div>
<div class="t" style="top:738.09px;font-size:11px;font-weight:400;color:#777;left:767.50px;width:800px;text-align:right;">6,8%</div>
<div class="t" style="top:775.58px;font-size:15.5px;font-weight:700;color:#262626;letter-spacing:0.137px;left:1086.60px;transform:scaleX(1.0135651509361865);transform-origin:0 0;">Кофейня 4</div>
<div class="t" style="top:777.99px;font-size:11px;font-weight:400;color:#777;letter-spacing:0.357px;left:468.36px;width:800px;text-align:right;transform:scaleX(1.0619412515964242);transform-origin:100% 0;">1 800 000</div>
<div class="t" style="top:777.99px;font-size:11px;font-weight:400;color:#777;left:627.00px;width:800px;text-align:right;">14,9%</div>
<div class="t" style="top:777.99px;font-size:11px;font-weight:400;color:#777;left:767.50px;width:800px;text-align:right;">10,9%</div>
<div class="t" style="top:816.58px;font-size:15.5px;font-weight:700;color:#262626;letter-spacing:0.137px;left:1086.60px;transform:scaleX(1.0135651509361865);transform-origin:0 0;">Кофейня 5</div>
<div class="t" style="top:816.99px;font-size:11px;font-weight:400;color:#777;letter-spacing:0.346px;left:465.95px;width:800px;text-align:right;transform:scaleX(1.059897828863346);transform-origin:100% 0;">1 600 000</div>
<div class="t" style="top:816.99px;font-size:11px;font-weight:400;color:#777;left:627.00px;width:800px;text-align:right;">16,8%</div>
<div class="t" style="top:816.99px;font-size:11px;font-weight:400;color:#777;left:767.50px;width:800px;text-align:right;">11,3%</div>
<div class="t" style="top:855.08px;font-size:15.5px;font-weight:700;color:#262626;letter-spacing:0.137px;left:1086.60px;transform:scaleX(1.0135651509361865);transform-origin:0 0;">Кофейня 6</div>
<div class="t" style="top:856.79px;font-size:11px;font-weight:400;color:#777;letter-spacing:0.346px;left:465.95px;width:800px;text-align:right;transform:scaleX(1.059897828863346);transform-origin:100% 0;">1 400 000</div>
<div class="t" style="top:856.79px;font-size:11px;font-weight:400;color:#777;left:627.00px;width:800px;text-align:right;">34,1%</div>
<div class="t" style="top:856.79px;font-size:11px;font-weight:400;color:#777;left:767.50px;width:800px;text-align:right;">30,1%</div>
<svg class="r" style="left:1160px;top:590px" width="12" height="12" viewBox="0 0 12 12"><circle cx="5" cy="5" r="3.6" fill="none" stroke="#ccc" stroke-width="1"/><line x1="7.6" y1="7.6" x2="10" y2="10" stroke="#ccc" stroke-width="1.2"/></svg>
</body></html>
